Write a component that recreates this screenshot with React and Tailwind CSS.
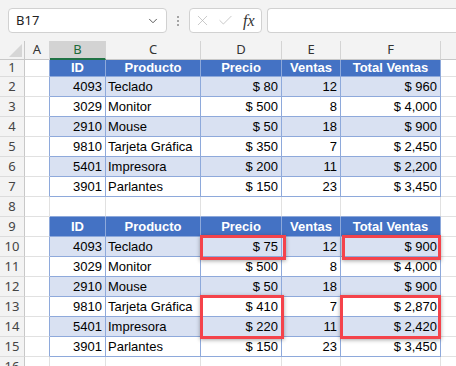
import React from 'react'
import { ChevronDown, X, Check } from 'lucide-react'

const widths = [25, 56, 95, 81, 59, 100]
const letters = ['A', 'B', 'C', 'D', 'E', 'F']

const tableA = [
    ['4093', 'Teclado', '$ 80', '12', '$ 960'],
    ['3029', 'Monitor', '$ 500', '8', '$ 4,000'],
    ['2910', 'Mouse', '$ 50', '18', '$ 900'],
    ['9810', 'Tarjeta Gráfica', '$ 350', '7', '$ 2,450'],
    ['5401', 'Impresora', '$ 200', '11', '$ 2,200'],
    ['3901', 'Parlantes', '$ 150', '23', '$ 3,450'],
]

const tableB = [
    ['4093', 'Teclado', '$ 75', '12', '$ 900'],
    ['3029', 'Monitor', '$ 500', '8', '$ 4,000'],
    ['2910', 'Mouse', '$ 50', '18', '$ 900'],
    ['9810', 'Tarjeta Gráfica', '$ 410', '7', '$ 2,870'],
    ['5401', 'Impresora', '$ 220', '11', '$ 2,420'],
    ['3901', 'Parlantes', '$ 150', '23', '$ 3,450'],
]

const headers = ['ID', 'Producto', 'Precio', 'Ventas', 'Total Ventas']

function buildRows() {
    const rows = []
    const addTable = (start, data) => {
        rows.push({ n: start, kind: 'head', h: start === 1 ? 17 : 20, cells: headers })
        data.forEach((d, i) => {
            rows.push({ n: start + i + 1, kind: i % 2 === 0 ? 'band' : 'plain', h: 20, cells: d })
        })
    }
    addTable(1, tableA)
    rows.push({ n: 8, kind: 'empty', h: 20, cells: [], beforeHead: true })
    addTable(9, tableB)
    rows.push({ n: 16, kind: 'empty', h: 20, cells: [] })
    return rows
}

function RowHead({ n, h }) {
    return (
        <div
            className="w-[25px] shrink-0 flex items-center justify-center bg-[#f3f3f3] border-r border-b border-r-[#c8c8c8] border-b-[#dcdcdc] text-[13px] text-[#444]"
            style={{ height: h, fontFamily: '"Noto Sans", sans-serif' }}
        >
            {n}
        </div>
    )
}

function Row({ row }) {
    const inTable = row.kind !== 'empty'
    const bg = row.kind === 'head' ? 'bg-[#4472c4]' : row.kind === 'band' ? 'bg-[#d9e1f2]' : 'bg-white'
    return (
        <div className="flex" style={{ height: row.h }}>
            <RowHead n={row.n} h={row.h} />
            <div className={'w-[25px] shrink-0 border-b border-b-[#e1e1e1] border-r ' + (inTable ? 'border-r-[#8ea9db]' : 'border-r-[#e1e1e1]')} />
            {widths.slice(1).map((w, i) => {
                const text = row.cells[i]
                let align = 'justify-end pr-[3px]'
                if (row.kind === 'head') align = 'justify-center font-bold text-white'
                else if (i === 1) align = 'justify-start pl-[2px]'
                const border = inTable
                    ? 'border-r border-b border-[#8ea9db]'
                    : row.beforeHead
                        ? 'border-r border-b border-r-[#e1e1e1] border-b-[#8ea9db]'
                        : 'border-r border-b border-[#e1e1e1]'
                const rb = inTable && i === 4 ? '' : ''
                return (
                    <div
                        key={i}
                        className={'shrink-0 flex items-center whitespace-nowrap text-[13px] text-black ' + (inTable ? bg : 'bg-white') + ' ' + border + ' ' + align + rb}
                        style={{ width: w }}
                    >
                        {text}
                    </div>
                )
            })}
            <div className="flex-1 border-b border-[#e1e1e1] bg-white" />
        </div>
    )
}

function Toolbar() {
    return (
        <div className="h-[41px] bg-[#f3f3f3] flex items-start pt-[8px] pl-[8px]" style={{ fontFamily: '"Noto Sans", sans-serif' }}>
            <div className="w-[159px] h-[25px] bg-white border border-[#d1d1d1] rounded-[4px] flex items-center justify-between pl-[7px] pr-[6px]">
                <span className="text-[13px] text-[#222]">B17</span>
                <ChevronDown size={14} strokeWidth={1.5} className="text-[#444]" />
            </div>
            <div className="w-[22px] h-[25px] flex flex-col items-center justify-center gap-[2px]">
                <span className="w-[2px] h-[2px] rounded-full bg-[#8a8a8a]" />
                <span className="w-[2px] h-[2px] rounded-full bg-[#8a8a8a]" />
                <span className="w-[2px] h-[2px] rounded-full bg-[#8a8a8a]" />
            </div>
            <div className="w-[73px] h-[25px] bg-white border border-[#d1d1d1] rounded-[4px] flex items-center pl-[4px] gap-[6px]">
                <X size={17} strokeWidth={1} className="text-[#b4b4b4]" />
                <Check size={17} strokeWidth={1} className="text-[#b4b4b4]" />
                <span className="text-[16px] italic text-[#333] leading-none ml-[3px]" style={{ fontFamily: '"Liberation Serif", serif' }}>fx</span>
            </div>
            <div className="flex-1 h-[25px] ml-[5px] bg-white border border-r-0 border-[#d1d1d1] rounded-l-[4px]" />
        </div>
    )
}

function ColumnHeader() {
    return (
        <div className="flex h-[19px] bg-[#f3f3f3]" style={{ fontFamily: '"Noto Sans", sans-serif' }}>
            <div className="w-[25px] shrink-0 relative border-r border-b border-[#c8c8c8]">
                <div className="absolute right-[2px] bottom-[2px] w-0 h-0 border-l-[13px] border-l-transparent border-b-[13px] border-b-[#d6d6d6]" />
            </div>
            {widths.map((w, i) => (
                <div
                    key={i}
                    className={'shrink-0 flex items-center justify-center text-[13px] border-r border-r-[#d4d4d4] ' + (i === 1 ? 'bg-[#d3d3d3] text-[#1d6b3a] border-b-2 border-b-[#217346]' : 'text-[#333] border-b border-b-[#c8c8c8]')}
                    style={{ width: w }}
                >
                    {letters[i]}
                </div>
            ))}
            <div className="flex-1 border-b border-[#c8c8c8]" />
        </div>
    )
}

function RedBox({ className }) {
    return <div className={'absolute border-[3px] border-[#f4434b] shadow-[0_1px_4px_rgba(0,0,0,0.35)] ' + className} />
}

export default function App() {
    const rows = buildRows()
    return (
        <div className="w-[456px] h-[366px] overflow-hidden bg-white relative" style={{ fontFamily: '"Liberation Sans", Arial, sans-serif' }}>
            <Toolbar />
            <ColumnHeader />
            {rows.map((r) => <Row key={r.n} row={r} />)}
            <RedBox className="left-[200px] top-[235px] w-[86px] h-[25px]" />
            <RedBox className="left-[342px] top-[235px] w-[99px] h-[25px]" />
            <RedBox className="left-[200px] top-[295px] w-[84px] h-[44px]" />
            <RedBox className="left-[340px] top-[295px] w-[101px] h-[44px]" />
        </div>
    )
}
